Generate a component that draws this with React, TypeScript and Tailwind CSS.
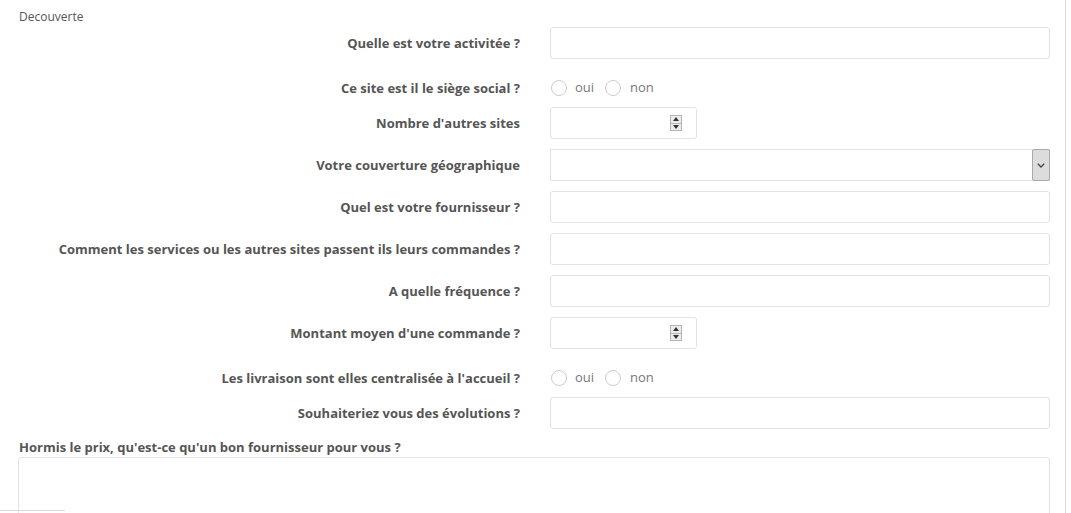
import React from "react";

const labelCls =
  "w-[535px] shrink-0 pr-[15px] text-right text-[13px] font-bold text-[#555555] leading-[17px]";

function TextRow({ label }: { label: string }) {
  return (
    <div className="flex items-center h-[32px] mb-[10px]">
      <div className={labelCls}>{label}</div>
      <div className="flex-1 pl-[15px] pr-[15px]">
        <div className="h-[32px] w-full rounded-[3px] border border-[#e3e3e3] bg-white" />
      </div>
    </div>
  );
}

function Spinner() {
  return (
    <div className="flex flex-col w-[12px] h-[16px] border border-[#b5b5b5] bg-[#ececec]">
      <div className="flex-1 flex items-center justify-center border-b border-[#b5b5b5]">
        <svg width="6" height="4" viewBox="0 0 6 4">
          <path d="M3 0 L6 4 L0 4 Z" fill="#333" />
        </svg>
      </div>
      <div className="flex-1 flex items-center justify-center">
        <svg width="6" height="4" viewBox="0 0 6 4">
          <path d="M0 0 L6 0 L3 4 Z" fill="#333" />
        </svg>
      </div>
    </div>
  );
}

function NumberRow({ label }: { label: string }) {
  return (
    <div className="flex items-center h-[32px] mb-[10px]">
      <div className={labelCls}>{label}</div>
      <div className="flex-1 pl-[15px] pr-[15px]">
        <div className="h-[32px] w-[147px] rounded-[3px] border border-[#e3e3e3] bg-white flex items-center justify-end pr-[14px]">
          <Spinner />
        </div>
      </div>
    </div>
  );
}

function SelectRow({ label }: { label: string }) {
  return (
    <div className="flex items-center h-[32px] mb-[10px]">
      <div className={labelCls}>{label}</div>
      <div className="flex-1 pl-[15px] pr-[15px]">
        <div className="h-[32px] w-full border border-[#e3e3e3] bg-white flex items-stretch justify-end">
          <div className="w-[18px] my-[-1px] mr-[-1px] rounded-[2px] border border-[#a9a9a9] bg-[#dcdcdc] flex items-center justify-center">
            <svg width="8" height="5" viewBox="0 0 8 5">
              <path d="M0.8 0.8 L4 4 L7.2 0.8" fill="none" stroke="#444" strokeWidth="1.3" />
            </svg>
          </div>
        </div>
      </div>
    </div>
  );
}

function Radio() {
  return <div className="w-[16px] h-[16px] rounded-full border border-[#cccccc] bg-white" />;
}

function RadioRow({ label }: { label: string }) {
  return (
    <div className="flex items-start h-[28px] mb-[10px] pt-[11px]">
      <div className={labelCls + " leading-[16px]"}>{label}</div>
      <div className="flex-1 pl-[16px] flex items-center h-[16px] text-[13px] text-[#777777]">
        <Radio />
        <span className="ml-[8px] mr-[11px]">oui</span>
        <Radio />
        <span className="ml-[9px]">non</span>
      </div>
    </div>
  );
}

export default function App() {
  return (
    <div
      className="relative h-[513px] w-[1071px] overflow-hidden bg-white"
      style={{ fontFamily: '"Open Sans", "Liberation Sans", sans-serif' }}
    >
      <div className="w-[1066px] h-full border-r border-[#dcdcdc]">
        <div className="pt-[9px] pl-[19px] text-[12px] leading-[16px] text-[#555555]">Decouverte</div>
        <div className="mt-[2px]">
          <TextRow label="Quelle est votre activitée ?" />
          <RadioRow label="Ce site est il le siège social ?" />
          <NumberRow label="Nombre d'autres sites" />
          <SelectRow label="Votre couverture géographique" />
          <TextRow label="Quel est votre fournisseur ?" />
          <TextRow label="Comment les services ou les autres sites passent ils leurs commandes ?" />
          <TextRow label="A quelle fréquence ?" />
          <NumberRow label="Montant moyen d'une commande ?" />
          <RadioRow label="Les livraison sont elles centralisée à l'accueil ?" />
          <TextRow label="Souhaiteriez vous des évolutions ?" />
          <div className="pl-[19px] h-[18px] flex items-center text-[13px] font-bold text-[#555555]">
            Hormis le prix, qu'est-ce qu'un bon fournisseur pour vous ?
          </div>
          <div className="pl-[18px] pr-[15px]">
            <div className="h-[80px] w-full rounded-[3px] border border-[#e3e3e3] bg-white" />
          </div>
        </div>
      </div>
      <div className="absolute left-0 bottom-[2px] w-[65px] h-px bg-[#d8d8d8]" />
    </div>
  );
}
